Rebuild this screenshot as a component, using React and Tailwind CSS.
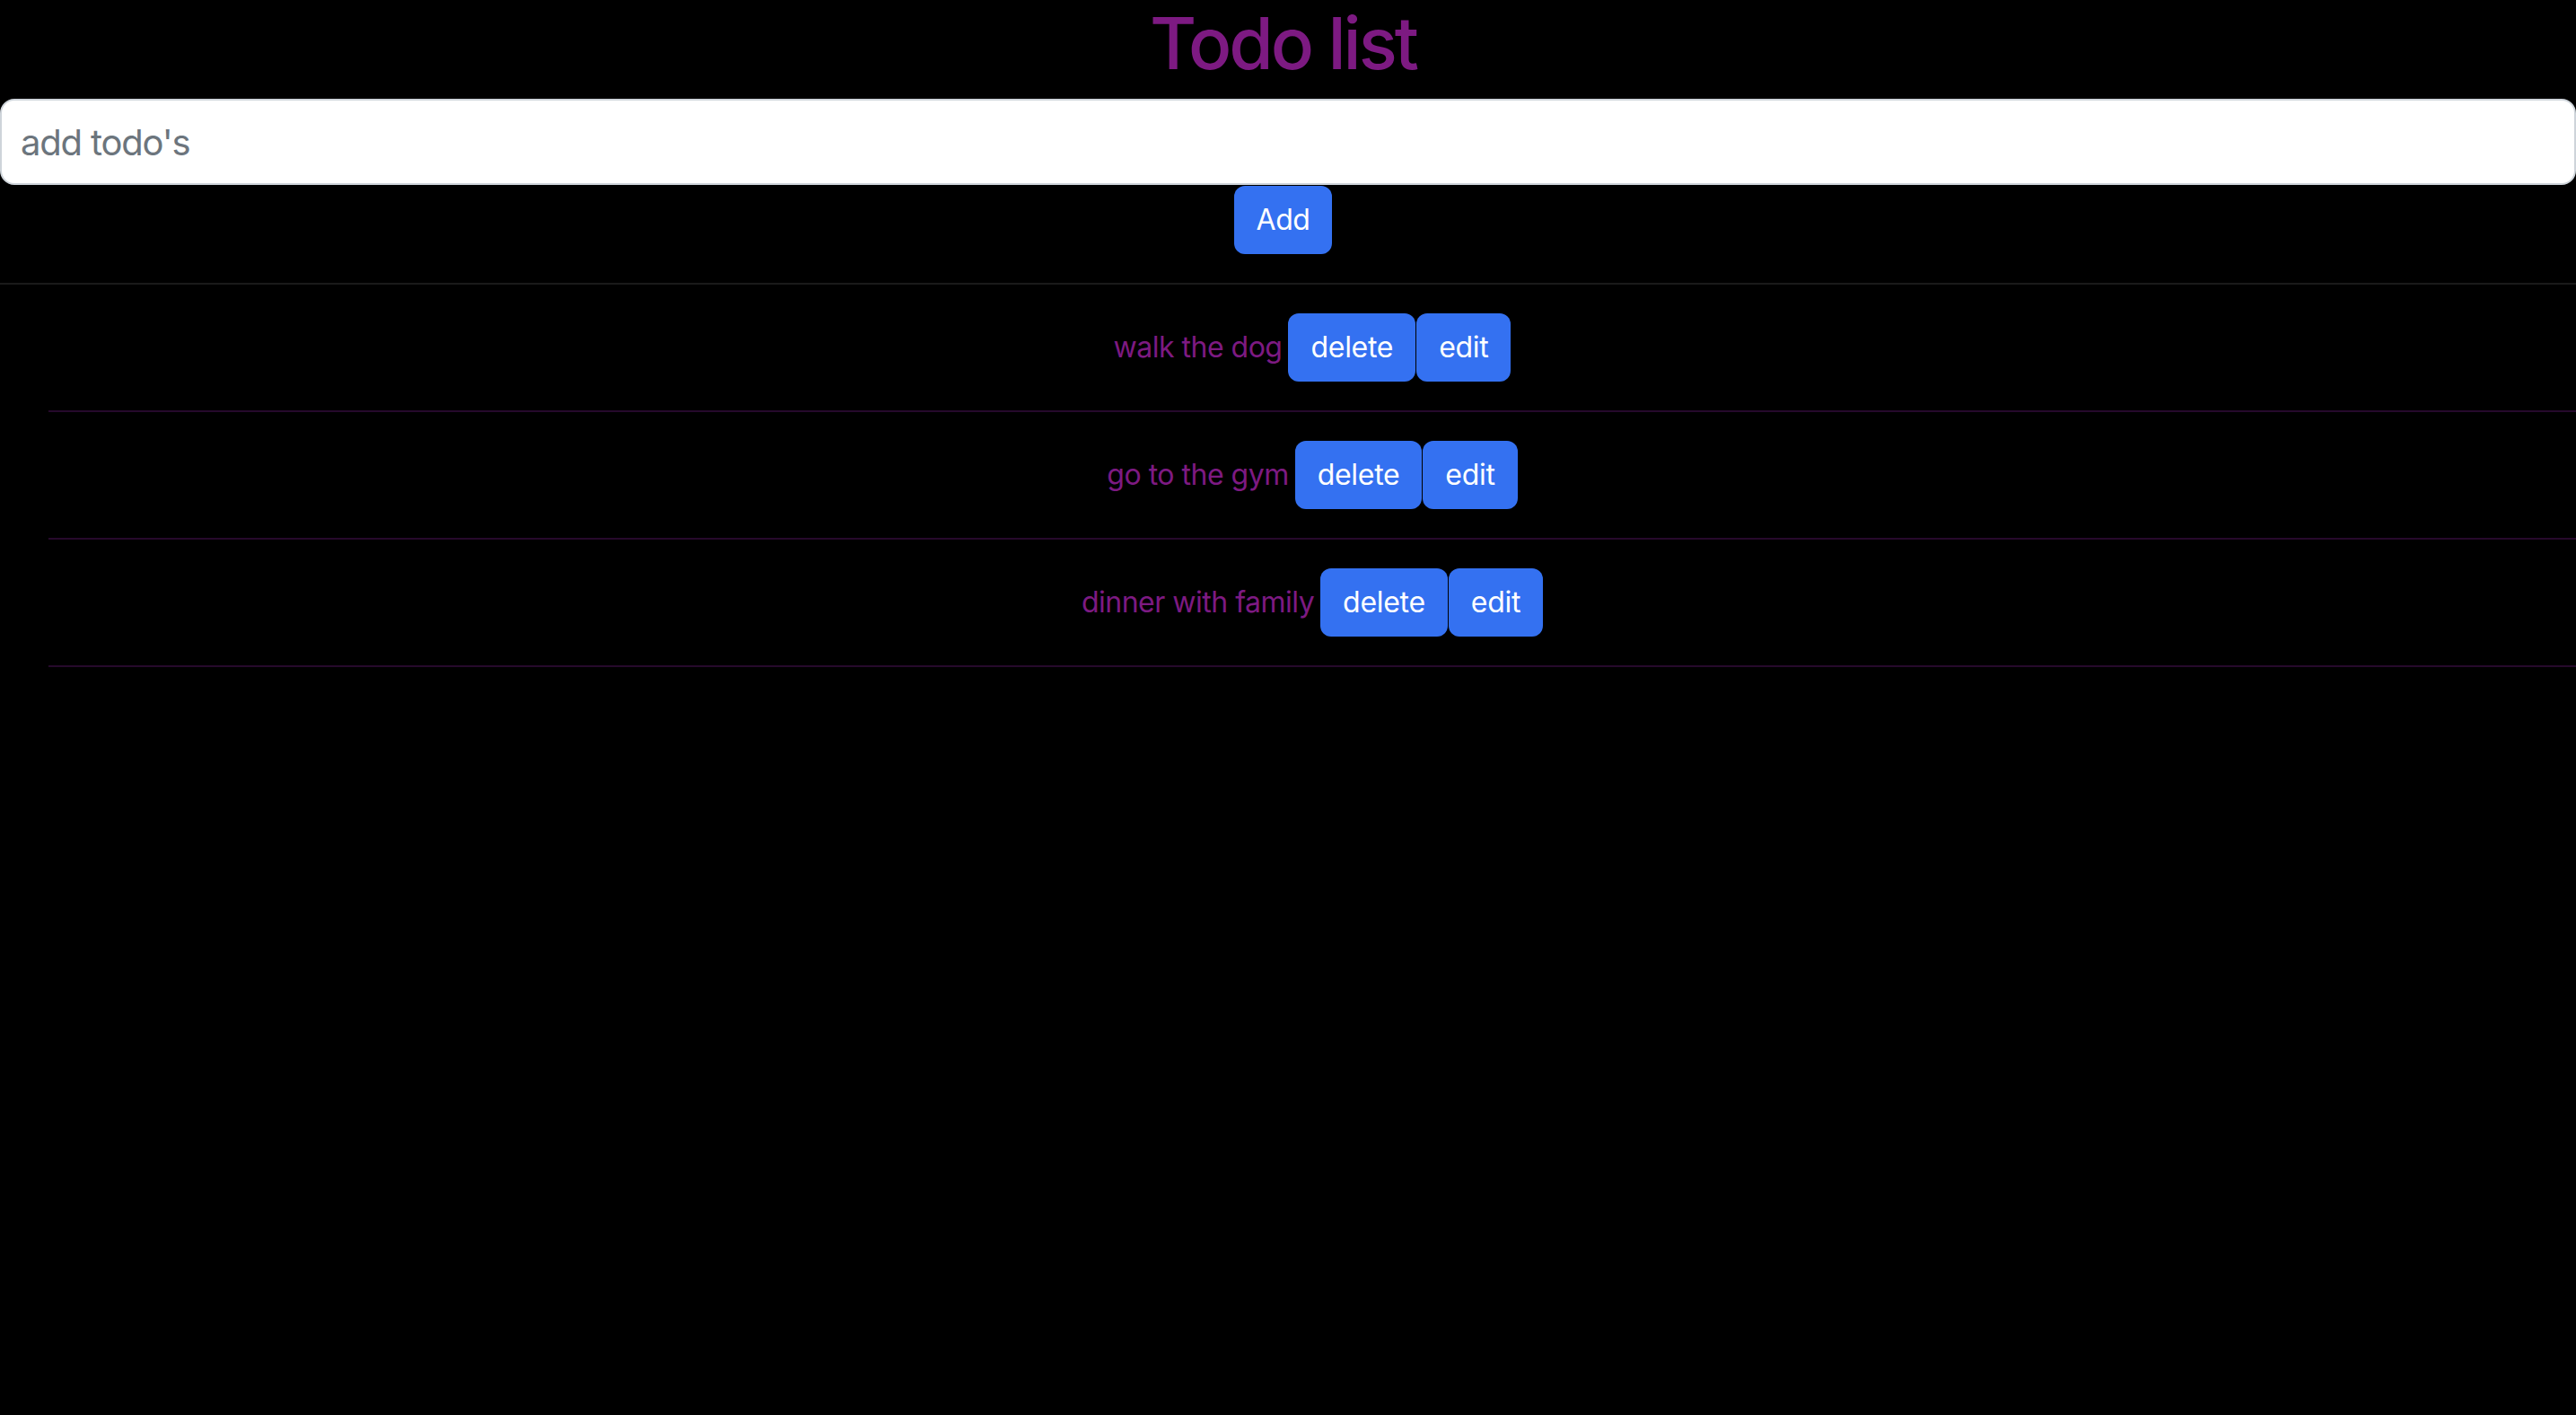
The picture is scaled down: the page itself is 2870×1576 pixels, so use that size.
import React from "react";

const todos = ["walk the dog", "go to the gym", "dinner with family"];

export default function App() {
  return (
    <div className="min-h-screen w-full bg-black font-['Inter','Liberation_Sans',sans-serif]">
      <h1 className="pr-[11px] text-center text-[80px] font-medium leading-[1.2] tracking-[-3px] text-[#7d1a82] mb-[14px]">
        Todo list
      </h1>
      <div className="border-b-2 border-[#1a1a1a] pb-[32px]">
        <input
          type="text"
          placeholder="add todo's"
          className="block w-full h-[96px] rounded-[16px] border-2 border-[#ced4da] bg-white px-[21px] text-[40px] tracking-[-1.2px] text-[#212529] placeholder:text-[#6c757d] outline-none"
        />
        <div className="flex justify-center mt-px pr-[11px]">
          <button className="h-[76px] rounded-[12px] bg-[#3471f1] px-[25px] text-[32px] leading-[1.5] tracking-[-0.5px] text-white">
            Add
          </button>
        </div>
      </div>
      <ul className="pl-[54px]">
        {todos.map((t) => (
          <li
            key={t}
            className="flex items-center justify-center border-b-2 border-[#26092c] py-[32px]"
          >
            <span className="text-[32px] leading-[1.5] tracking-[-0.5px] text-[#7d1a82]">{t}</span>
            <button className="ml-[7px] h-[76px] rounded-[12px] bg-[#3471f1] px-[25px] text-[32px] leading-[1.5] tracking-[-0.3px] text-white">
              delete
            </button>
            <button className="ml-[1px] h-[76px] rounded-[12px] bg-[#3471f1] px-[25px] text-[32px] leading-[1.5] tracking-[-0.3px] text-white">
              edit
            </button>
          </li>
        ))}
      </ul>
    </div>
  );
}
